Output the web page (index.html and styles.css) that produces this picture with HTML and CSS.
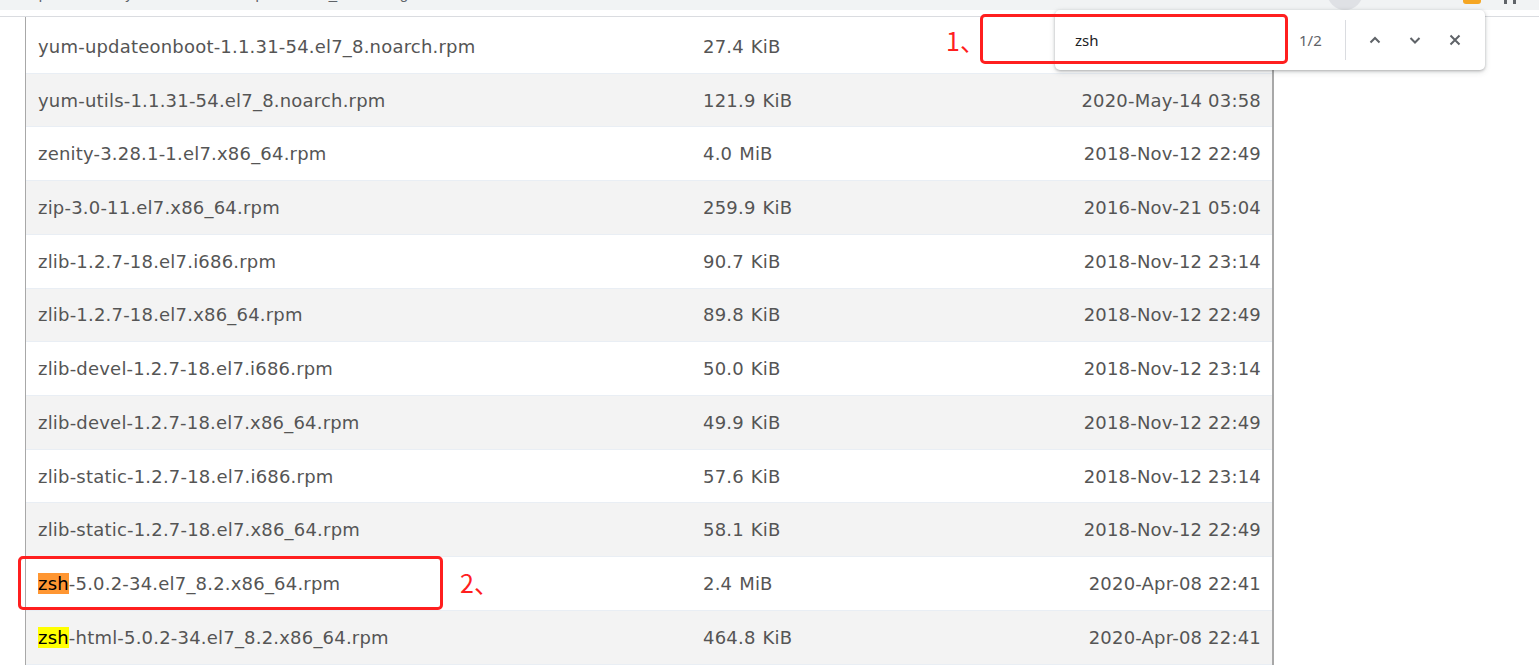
FILE: index.html
```html
<!DOCTYPE html>
<html>
<head>
<meta charset="utf-8">
<link rel="stylesheet" href="styles.css">
</head>
<body>
<div class="chrome">
  <div class="addr">http://mirrors.aliyun.com/centos/7/updates/x86_64/Packages/</div>
  <span class="tb-circle"></span>
  <span class="tb-ext"></span>
  <span class="tb-dots"></span>
</div>
<div class="strip"></div>
<div class="listing">
  <div class="row w"><span class="name">yum-updateonboot-1.1.31-54.el7_8.noarch.rpm</span><span class="size">27.4 KiB</span><span class="date">2020-May-14 03:58</span></div>
  <div class="row g"><span class="name">yum-utils-1.1.31-54.el7_8.noarch.rpm</span><span class="size">121.9 KiB</span><span class="date">2020-May-14 03:58</span></div>
  <div class="row w"><span class="name">zenity-3.28.1-1.el7.x86_64.rpm</span><span class="size">4.0 MiB</span><span class="date">2018-Nov-12 22:49</span></div>
  <div class="row g"><span class="name">zip-3.0-11.el7.x86_64.rpm</span><span class="size">259.9 KiB</span><span class="date">2016-Nov-21 05:04</span></div>
  <div class="row w"><span class="name">zlib-1.2.7-18.el7.i686.rpm</span><span class="size">90.7 KiB</span><span class="date">2018-Nov-12 23:14</span></div>
  <div class="row g"><span class="name">zlib-1.2.7-18.el7.x86_64.rpm</span><span class="size">89.8 KiB</span><span class="date">2018-Nov-12 22:49</span></div>
  <div class="row w"><span class="name">zlib-devel-1.2.7-18.el7.i686.rpm</span><span class="size">50.0 KiB</span><span class="date">2018-Nov-12 23:14</span></div>
  <div class="row g"><span class="name">zlib-devel-1.2.7-18.el7.x86_64.rpm</span><span class="size">49.9 KiB</span><span class="date">2018-Nov-12 22:49</span></div>
  <div class="row w"><span class="name">zlib-static-1.2.7-18.el7.i686.rpm</span><span class="size">57.6 KiB</span><span class="date">2018-Nov-12 23:14</span></div>
  <div class="row g"><span class="name">zlib-static-1.2.7-18.el7.x86_64.rpm</span><span class="size">58.1 KiB</span><span class="date">2018-Nov-12 22:49</span></div>
  <div class="row w"><span class="name"><mark class="cur">zsh</mark>-5.0.2-34.el7_8.2.x86_64.rpm</span><span class="size">2.4 MiB</span><span class="date">2020-Apr-08 22:41</span></div>
  <div class="row g"><span class="name"><mark class="hit">zsh</mark>-html-5.0.2-34.el7_8.2.x86_64.rpm</span><span class="size">464.8 KiB</span><span class="date">2020-Apr-08 22:41</span></div>
</div>

<div class="findbar">
  <div class="find-input">zsh</div>
  <div class="find-count">1/2</div>
  <div class="find-sep"></div>
  <button class="find-btn" aria-label="previous">
    <svg width="16" height="16" viewBox="0 0 16 16"><path d="M3.5 10.5 L8 6 L12.5 10.5" fill="none" stroke="#5f6368" stroke-width="2"/></svg>
  </button>
  <button class="find-btn" aria-label="next">
    <svg width="16" height="16" viewBox="0 0 16 16"><path d="M3.5 6 L8 10.5 L12.5 6" fill="none" stroke="#5f6368" stroke-width="2"/></svg>
  </button>
  <button class="find-btn" aria-label="close">
    <svg width="16" height="16" viewBox="0 0 16 16"><path d="M3.5 3.5 L12.5 12.5 M12.5 3.5 L3.5 12.5" fill="none" stroke="#5f6368" stroke-width="2"/></svg>
  </button>
</div>

<div class="anno box1"></div>
<div class="anno-label label1">1、</div>
<div class="anno box2"></div>
<div class="anno-label label2">2、</div>
</body>
</html>
```

FILE: styles.css
```css
html, body {
  margin: 0;
  padding: 0;
  background: #ffffff;
  overflow: hidden;
}
body {
  width: 1539px;
  height: 665px;
  position: relative;
  font-family: "DejaVu Sans", Verdana, sans-serif;
}
.chrome {
  height: 10px;
  background: #f1f3f4;
  position: relative;
  overflow: hidden;
}
.addr {
  position: absolute;
  left: 22px;
  top: -15px;
  font-family: "Liberation Sans", Arial, sans-serif;
  font-size: 15px;
  color: #5f6368;
  white-space: nowrap;
}
.tb-circle {
  position: absolute;
  left: 1327px;
  top: -26px;
  width: 36px;
  height: 36px;
  border-radius: 50%;
  background: #dfe1e5;
}
.tb-ext {
  position: absolute;
  left: 1463px;
  top: -10px;
  width: 18px;
  height: 14px;
  border-radius: 3px;
  background: #f5a623;
}
.tb-dots {
  position: absolute;
  left: 1504px;
  top: -6px;
  width: 12px;
  height: 10px;
  border-left: 3px solid #5f6368;
  border-right: 3px solid #5f6368;
  box-sizing: border-box;
}
.strip {
  height: 6px;
  background: #ffffff;
  border-bottom: 1px solid #dadce0;
}
.listing {
  margin-left: 25px;
  width: 1249px;
  border-left: 1px solid #a8a8a8;
  border-right: 2px solid #a8a8a8;
  box-sizing: border-box;
  padding-top: 3px;
}
.row {
  display: flex;
  align-items: center;
  height: 53.73px;
  box-sizing: border-box;
  border-bottom: 1px solid #e9eef4;
  font-size: 18px;
  letter-spacing: 0.2px;
  color: #555555;
  padding-left: 12px;
  padding-right: 11px;
}
.row.w { background: #ffffff; }
.row.g { background: #f3f3f3; }
.name {
  width: 665px;
  white-space: nowrap;
}
.size {
  width: 250px;
  word-spacing: 1px;
}
.date {
  flex: 1;
  text-align: right;
}
mark {
  color: #000000;
  padding: 0;
}
mark.cur { background: #ff9632; }
mark.hit { background: #ffff00; }

.findbar {
  position: absolute;
  left: 1055px;
  top: 10px;
  width: 430px;
  height: 60px;
  background: #ffffff;
  border-radius: 5px;
  box-shadow: 0 1px 3px rgba(60,64,67,0.35), 0 2px 6px rgba(60,64,67,0.15);
  display: flex;
  align-items: center;
  box-sizing: border-box;
  padding-left: 20px;
  font-family: "Noto Sans", "DejaVu Sans", sans-serif;
  font-size: 15px;
}
.find-input {
  width: 224px;
  color: #202124;
}
.find-count {
  width: 46px;
  color: #5f6368;
}
.find-sep {
  width: 1px;
  height: 40px;
  background: #dadce0;
  margin-right: 15px;
}
.find-btn {
  width: 28px;
  height: 28px;
  border: none;
  background: none;
  padding: 0;
  margin-right: 12px;
  display: flex;
  align-items: center;
  justify-content: center;
}
.anno {
  position: absolute;
  border: 3px solid #ff1f1f;
  border-radius: 5px;
  box-sizing: border-box;
}
.box1 {
  left: 980px;
  top: 14px;
  width: 308px;
  height: 50px;
}
.box2 {
  left: 18px;
  top: 556px;
  width: 425px;
  height: 54px;
}
.anno-label {
  position: absolute;
  color: #ff1f1f;
  font-family: "Noto Sans CJK SC", "Noto Sans", sans-serif;
  font-size: 25px;
  line-height: 1;
}
.label1 { left: 946px; top: 28px; }
.label2 { left: 460px; top: 570px; }
```
